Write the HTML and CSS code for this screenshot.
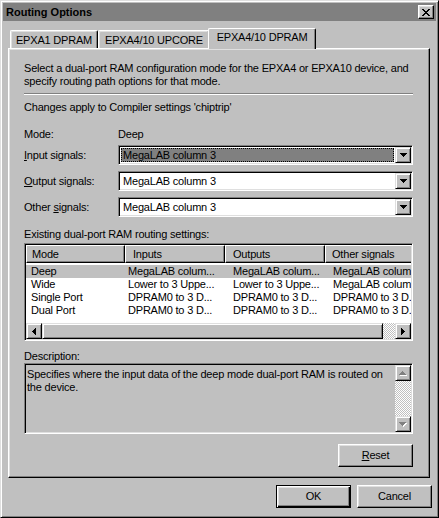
FILE: index.html
```html
<!DOCTYPE html>
<html>
<head>
<meta charset="utf-8">
<title>Routing Options</title>
<link rel="stylesheet" href="styles.css">
</head>
<body>
<div class="window">
  <div class="titlebar">
    <span class="title">Routing Options</span>
    <div class="close-btn">
      <svg width="8" height="7" viewBox="0 0 8 7" shape-rendering="crispEdges"><path d="M0 0h2v1h-2zM6 0h2v1h-2zM1 1h2v1h-2zM5 1h2v1h-2zM2 2h4v1h-4zM3 3h2v1h-2zM2 4h4v1h-4zM1 5h2v1h-2zM5 5h2v1h-2zM0 6h2v1h-2zM6 6h2v1h-2z" fill="#000"/></svg>
    </div>
  </div>

  <div class="tabs">
    <div class="tab tab-1">EPXA1 DPRAM</div>
    <div class="tab tab-2">EPXA4/10 UPCORE</div>
    <div class="tab tab-3 active">EPXA4/10 DPRAM</div>
  </div>

  <div class="panel">
    <p class="text">Select a dual-port RAM configuration mode for the EPXA4 or EPXA10 device, and<br>specify routing path options for that mode.</p>
    <div class="sep"></div>
    <p class="text changes">Changes apply to Compiler settings 'chiptrip'</p>

    <div class="mode-row"><span class="lbl">Mode:</span><span>Deep</span></div>

    <div class="field-row first">
      <span class="lbl"><u>I</u>nput signals:</span>
      <div class="combo">
        <div class="combo-value sel">MegaLAB column 3</div>
        <div class="drop-btn"><svg width="7" height="4" viewBox="0 0 7 4" shape-rendering="crispEdges"><path d="M0 0h7v1h-1v1h-1v1h-1v1h-1v-1h-1v-1h-1v-1h-1z" fill="#000"/></svg></div>
      </div>
    </div>
    <div class="field-row">
      <span class="lbl"><u>O</u>utput signals:</span>
      <div class="combo">
        <div class="combo-value">MegaLAB column 3</div>
        <div class="drop-btn"><svg width="7" height="4" viewBox="0 0 7 4" shape-rendering="crispEdges"><path d="M0 0h7v1h-1v1h-1v1h-1v1h-1v-1h-1v-1h-1v-1h-1z" fill="#000"/></svg></div>
      </div>
    </div>
    <div class="field-row">
      <span class="lbl">Other <u>s</u>ignals:</span>
      <div class="combo">
        <div class="combo-value">MegaLAB column 3</div>
        <div class="drop-btn"><svg width="7" height="4" viewBox="0 0 7 4" shape-rendering="crispEdges"><path d="M0 0h7v1h-1v1h-1v1h-1v1h-1v-1h-1v-1h-1v-1h-1z" fill="#000"/></svg></div>
      </div>
    </div>

    <p class="text existing">Existing dual-port RAM routing settings:</p>
    <div class="listview">
      <div class="lv-header">
        <div class="hcell c1">Mode</div>
        <div class="hcell c2">Inputs</div>
        <div class="hcell c3">Outputs</div>
        <div class="hcell c4">Other signals</div>
      </div>
      <div class="lv-body">
        <div class="lv-row selected"><span class="cell c1">Deep</span><span class="cell c2">MegaLAB colum...</span><span class="cell c3">MegaLAB colum...</span><span class="cell c4">MegaLAB colum...</span></div>
        <div class="lv-row"><span class="cell c1">Wide</span><span class="cell c2">Lower to 3 Uppe...</span><span class="cell c3">Lower to 3 Uppe...</span><span class="cell c4">MegaLAB colum...</span></div>
        <div class="lv-row"><span class="cell c1">Single Port</span><span class="cell c2">DPRAM0 to 3 D...</span><span class="cell c3">DPRAM0 to 3 D...</span><span class="cell c4">DPRAM0 to 3 D...</span></div>
        <div class="lv-row"><span class="cell c1">Dual Port</span><span class="cell c2">DPRAM0 to 3 D...</span><span class="cell c3">DPRAM0 to 3 D...</span><span class="cell c4">DPRAM0 to 3 D...</span></div>
      </div>
      <div class="hscroll">
        <div class="sb-btn"><svg width="4" height="7" viewBox="0 0 4 7" shape-rendering="crispEdges"><path d="M3 0h1v7h-1v-1h-1v-1h-1v-1h-1v-1h1v-1h1v-1h1z" fill="#000"/></svg></div>
        <div class="sb-thumb-h"></div>
        <div class="sb-track"></div>
        <div class="sb-btn"><svg width="4" height="7" viewBox="0 0 4 7" shape-rendering="crispEdges"><path d="M0 0h1v1h1v1h1v1h1v1h-1v1h-1v1h-1v1h-1z" fill="#000"/></svg></div>
      </div>
    </div>

    <p class="text desc-label">Description:</p>
    <div class="desc">
      <div class="desc-text">Specifies where the input data of the deep mode dual-port RAM is routed on<br>the device.</div>
      <div class="vscroll">
        <div class="sb-btn"><svg width="8" height="5" viewBox="0 0 8 5" shape-rendering="crispEdges"><path d="M4 1h1v1h1v1h1v1h1v1h-7v-1h1v-1h1v-1h1z" fill="#fff"/><path d="M3 0h1v1h1v1h1v1h1v1h-7v-1h1v-1h1v-1h1z" fill="#808080"/></svg></div>
        <div class="sb-track v"></div>
        <div class="sb-btn"><svg width="8" height="5" viewBox="0 0 8 5" shape-rendering="crispEdges"><path d="M1 1h7v1h-1v1h-1v1h-1v1h-1v-1h-1v-1h-1v-1h-1z" fill="#fff"/><path d="M0 0h7v1h-1v1h-1v1h-1v1h-1v-1h-1v-1h-1v-1h-1z" fill="#808080"/></svg></div>
      </div>
    </div>

    <div class="reset-row">
      <div class="btn"><span><u>R</u>eset</span></div>
    </div>
  </div>

  <div class="footer">
    <div class="btn default"><span>OK</span></div>
    <div class="btn"><span>Cancel</span></div>
  </div>
</div>
</body>
</html>
```
FILE: styles.css
```css
html, body {
  margin: 0;
  padding: 0;
  background: #c0c0c0;
}

body {
  font-family: "Liberation Sans", Arial, sans-serif;
  font-size: 11px;
  line-height: 13px;
  letter-spacing: -0.2px;
  color: #000;
}

u {
  text-decoration: underline;
  text-underline-offset: 1px;
}

.window {
  width: 439px;
  height: 518px;
  box-sizing: border-box;
  background: #c0c0c0;
  border: 1px solid;
  border-color: #dfdfdf #000 #000 #dfdfdf;
  box-shadow: inset 1px 1px #fff, inset -1px -1px #808080;
  padding: 2px;
}

/* ---------- title bar ---------- */
.titlebar {
  height: 18px;
  background: #808080;
  display: flex;
  align-items: center;
  justify-content: space-between;
  padding: 0 2px 0 3px;
}

.title {
  font-weight: bold;
  color: #000;
  letter-spacing: 0;
}

.close-btn {
  width: 16px;
  height: 14px;
  box-sizing: border-box;
  background: #c0c0c0;
  border: 1px solid;
  border-color: #fff #000 #000 #fff;
  box-shadow: inset -1px -1px #808080, inset 1px 1px #dfdfdf;
  display: flex;
  align-items: center;
  justify-content: center;
}

.close-btn svg { display: block; }

/* ---------- tabs ---------- */
.tabs {
  display: flex;
  align-items: flex-end;
  height: 20px;
  margin-top: 7px;
  padding-left: 7px;
}

.tab {
  height: 18px;
  box-sizing: border-box;
  background: #c0c0c0;
  border-top: 1px solid #fff;
  border-left: 1px solid #fff;
  border-right: 1px solid #000;
  border-radius: 2px 2px 0 0;
  box-shadow: inset -1px 0 #808080, inset 1px 1px #dfdfdf;
  text-align: center;
  padding-top: 3px;
  white-space: nowrap;
}

.tab-1 { width: 88px; }
.tab-2 { width: 112px; }
.tab-3 { width: 108px; }

.tab.active {
  height: 21px;
  margin: 0 -2px -1px -2px;
  padding-top: 2px;
  position: relative;
  z-index: 1;
  box-shadow: inset -1px 0 #808080;
}

/* ---------- panel ---------- */
.panel {
  margin-left: 5px;
  width: 422px;
  height: 430px;
  box-sizing: border-box;
  border: 1px solid;
  border-color: #fff #000 #000 #fff;
  box-shadow: inset -1px -1px #808080, inset 1px 1px #dfdfdf;
  padding: 13px 16px 0 15px;
}

.text {
  margin: 0;
  white-space: nowrap;
}

.sep {
  margin-top: 5px;
  height: 0;
  border-top: 1px solid #808080;
  border-bottom: 1px solid #fff;
}

.changes { margin-top: 6px; }

.mode-row {
  margin-top: 14px;
  display: flex;
  height: 13px;
}

.lbl {
  width: 94px;
  flex: none;
  white-space: nowrap;
}

.field-row {
  display: flex;
  align-items: center;
  height: 20px;
  margin-top: 6px;
}

.field-row.first { margin-top: 4px; }

.combo {
  flex: 1;
  height: 20px;
  box-sizing: border-box;
  background: #fff;
  border: 1px solid;
  border-color: #808080 #fff #fff #808080;
  box-shadow: inset 1px 1px #000, inset -1px -1px #dfdfdf;
  padding: 1px;
  display: flex;
}

.combo-value {
  flex: 1;
  margin: 1px;
  padding-left: 2px;
  line-height: 14px;
  white-space: nowrap;
}

.combo-value.sel {
  background: #808080;
  outline: 1px dotted #000;
  outline-offset: -1px;
}

.drop-btn,
.sb-btn {
  width: 16px;
  height: 16px;
  flex: none;
  box-sizing: border-box;
  background: #c0c0c0;
  border: 1px solid;
  border-color: #dfdfdf #000 #000 #dfdfdf;
  box-shadow: inset 1px 1px #fff, inset -1px -1px #808080;
  display: flex;
  align-items: center;
  justify-content: center;
}

.drop-btn svg,
.sb-btn svg { display: block; }

.existing { margin-top: 11px; }

/* ---------- list view ---------- */
.listview {
  margin-top: 2px;
  height: 98px;
  box-sizing: border-box;
  background: #fff;
  border: 1px solid;
  border-color: #808080 #fff #fff #808080;
  box-shadow: inset 1px 1px #000, inset -1px -1px #dfdfdf;
  padding: 1px;
  display: flex;
  flex-direction: column;
  overflow: hidden;
}

.lv-header {
  display: flex;
  height: 18px;
  flex: none;
  overflow: hidden;
}

.hcell {
  flex: none;
  height: 18px;
  box-sizing: border-box;
  background: #c0c0c0;
  border: 1px solid;
  border-color: #fff #000 #000 #fff;
  box-shadow: inset -1px -1px #808080;
  padding: 2px 0 0 5px;
  white-space: nowrap;
  overflow: hidden;
}

.hcell.c1 { width: 99px; }
.hcell.c2 { width: 100px; padding-left: 7px; }
.hcell.c3 { width: 100px; padding-left: 7px; }
.hcell.c4 { width: 100px; padding-left: 6px; }

.lv-body {
  flex: 1;
  padding-top: 2px;
  overflow: hidden;
}

.lv-row {
  display: flex;
  height: 13px;
  white-space: nowrap;
}

.lv-row.selected { background: #c0c0c0; }

.cell {
  flex: none;
  overflow: hidden;
  box-sizing: border-box;
}

.cell.c1 { width: 99px; padding-left: 5px; }
.cell.c2 { width: 100px; padding-left: 3px; }
.cell.c3 { width: 100px; padding-left: 8px; }
.cell.c4 { width: 100px; padding-left: 8px; }

.hscroll {
  display: flex;
  height: 16px;
  flex: none;
}

.sb-thumb-h {
  width: 341px;
  flex: none;
  box-sizing: border-box;
  background: #c0c0c0;
  border: 1px solid;
  border-color: #dfdfdf #000 #000 #dfdfdf;
  box-shadow: inset 1px 1px #fff, inset -1px -1px #808080;
}

.sb-track {
  flex: 1;
  background: repeating-conic-gradient(#fff 0 25%, #c0c0c0 0 50%) 0 0 / 2px 2px;
}

/* ---------- description ---------- */
.desc-label { margin-top: 9px; }

.desc {
  height: 71px;
  box-sizing: border-box;
  background: #c0c0c0;
  border: 1px solid;
  border-color: #808080 #fff #fff #808080;
  box-shadow: inset 1px 1px #000, inset -1px -1px #dfdfdf;
  padding: 1px;
  display: flex;
}

.desc-text {
  flex: 1;
  padding: 3px 0 0 1px;
  white-space: nowrap;
}

.vscroll {
  width: 16px;
  display: flex;
  flex-direction: column;
}

/* ---------- buttons ---------- */
.reset-row {
  margin-top: 10px;
  display: flex;
  justify-content: flex-end;
}

.btn {
  width: 75px;
  height: 23px;
  box-sizing: border-box;
  background: #c0c0c0;
  border: 1px solid;
  border-color: #fff #000 #000 #fff;
  box-shadow: inset -1px -1px #808080, inset 1px 1px #dfdfdf;
  display: flex;
  align-items: center;
  justify-content: center;
}

.btn.default {
  border-color: #000;
  box-shadow: inset 1px 1px #fff, inset -1px -1px #000, inset -2px -2px #808080, inset 2px 2px #dfdfdf;
}

.footer {
  margin-top: 7px;
  display: flex;
  justify-content: flex-end;
  gap: 6px;
  padding-right: 4px;
}
```
